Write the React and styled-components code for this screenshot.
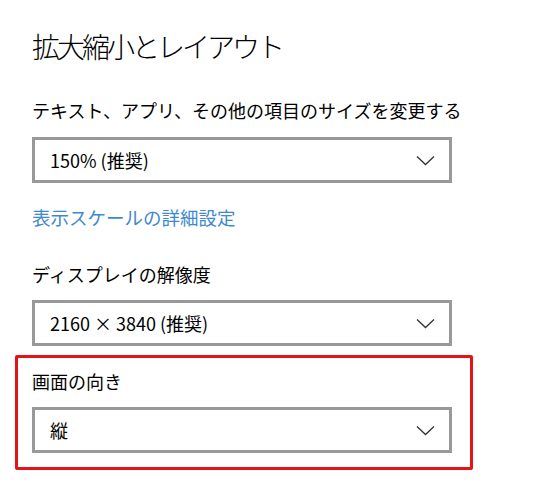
import React from "react";
import styled, { createGlobalStyle } from "styled-components";

const GlobalStyle = createGlobalStyle`
  body {
    margin: 0;
    background: #ffffff;
    font-family: "Noto Sans CJK JP", "Noto Sans", sans-serif;
    color: #000000;
  }
`;

const Page = styled.div`
  width: 556px;
  height: 485px;
  box-sizing: border-box;
  padding: 26px 0 0 32px;
  overflow: hidden;
`;

const Title = styled.h1`
  margin: 0 0 32px 0;
  font-size: 28px;
  line-height: 40px;
  font-weight: 300;
  letter-spacing: -3px;
`;

const Label = styled.div`
  font-size: 18px;
  line-height: 24px;
  margin-bottom: ${({ $gap }) => $gap || 15}px;
`;

const Select = styled.div`
  width: 420px;
  height: 46px;
  box-sizing: border-box;
  border: 3px solid #999999;
  display: flex;
  align-items: center;
  justify-content: space-between;
  padding: 0 14px 0 15px;
  font-size: 18px;
`;

const Link = styled.a`
  display: block;
  margin: 22px 0 33px 0;
  font-size: 18.5px;
  line-height: 24px;
  color: #4189cf;
  text-decoration: none;
  cursor: pointer;
`;

const Highlight = styled.div`
  width: 458px;
  box-sizing: border-box;
  margin: 9px 0 0 -17px;
  padding: 11px 0 14px 14px;
  border: 3px solid #e51313;
  border-radius: 2px;
`;

const Chevron = () => (
  <svg width="19" height="11" viewBox="0 0 19 11">
    <path d="M1 1.5 L9.5 9.5 L18 1.5" fill="none" stroke="#333" strokeWidth="1.3" />
  </svg>
);

const Dropdown = ({ value }) => (
  <Select>
    <span>{value}</span>
    <Chevron />
  </Select>
);

export default function App() {
  return (
    <>
      <GlobalStyle />
      <Page>
        <Title>拡大縮小とレイアウト</Title>
        <Label>テキスト、アプリ、その他の項目のサイズを変更する</Label>
        <Dropdown value="150% (推奨)" />
        <Link>表示スケールの詳細設定</Link>
        <Label $gap={14}>ディスプレイの解像度</Label>
        <Dropdown value="2160 × 3840 (推奨)" />
        <Highlight>
          <Label $gap={14}>画面の向き</Label>
          <Dropdown value="縦" />
        </Highlight>
      </Page>
    </>
  );
}
